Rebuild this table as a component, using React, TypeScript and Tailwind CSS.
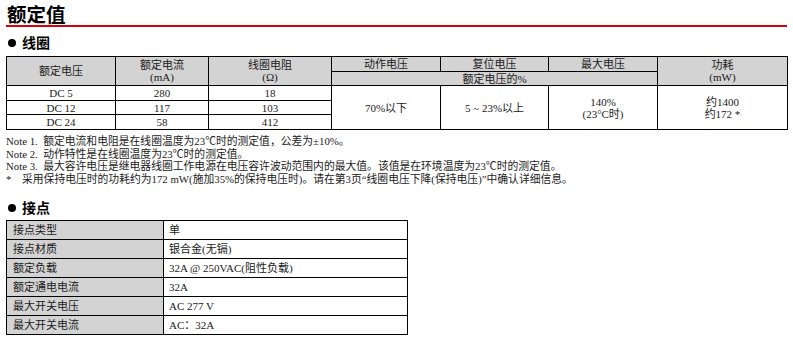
import React from "react";

const th = "border border-black bg-[#d3d3d3] font-normal text-center p-0 leading-[12px] text-[11px]";
const td = "border border-black text-center p-0 leading-[12px] text-[11px]";

export default function App() {
  return (
    <div className="w-[793px] h-[343px] bg-white text-[#1a1a1a] font-['Liberation_Serif','Noto_Sans_CJK_SC',serif] relative overflow-hidden">
      <div className="pl-[7px] pt-[3px] h-[25px] text-[19.5px] leading-[22px] font-bold text-black font-['Noto_Sans_CJK_SC',sans-serif]">
        额定值
      </div>
      <div className="ml-[6px] w-[781px] h-[2px] bg-[#d7000f]" />
      <div className="flex items-center pl-[8px] mt-[7px] h-[17px] gap-[6px]">
        <span className="w-[8px] h-[8px] rounded-full bg-black" />
        <span className="text-[14px] font-bold text-black font-['Noto_Sans_CJK_SC',sans-serif] leading-[17px]">线圈</span>
      </div>
      <div className="pl-[6px] mt-[5px]">
        <table className="border-collapse table-fixed w-[781px] border border-black">
          <colgroup>
            <col className="w-[109px]" />
            <col className="w-[93px]" />
            <col className="w-[123px]" />
            <col className="w-[109px]" />
            <col className="w-[108px]" />
            <col className="w-[109px]" />
            <col className="w-[130px]" />
          </colgroup>
          <tbody>
            <tr className="h-[15px]">
              <th rowSpan={2} className={th}>额定电压</th>
              <th rowSpan={2} className={th}>额定电流<br />(mA)</th>
              <th rowSpan={2} className={th}>线圈电阻<br />(Ω)</th>
              <th className={th}>动作电压</th>
              <th className={th}>复位电压</th>
              <th className={th}>最大电压</th>
              <th rowSpan={2} className={th}>功耗<br />(mW)</th>
            </tr>
            <tr className="h-[14px]">
              <th colSpan={3} className={th}>额定电压的%</th>
            </tr>
            <tr className="h-[15px]">
              <td className={td}>DC 5</td>
              <td className={td}>280</td>
              <td className={td}>18</td>
              <td rowSpan={3} className={td}>70%以下</td>
              <td rowSpan={3} className={td}>5 ~ 23%以上</td>
              <td rowSpan={3} className={td}>140%<br />(23°C时)</td>
              <td rowSpan={3} className={td}>约1400<br />约172 *</td>
            </tr>
            <tr className="h-[14px]">
              <td className={td}>DC 12</td>
              <td className={td}>117</td>
              <td className={td}>103</td>
            </tr>
            <tr className="h-[15px]">
              <td className={td}>DC 24</td>
              <td className={td}>58</td>
              <td className={td}>412</td>
            </tr>
          </tbody>
        </table>
      </div>
      <div className="pl-[6px] mt-[5px] text-[10.8px] leading-[12.5px]">
        <div>Note 1.&nbsp; 额定电流和电阻是在线圈温度为23℃时的测定值，公差为±10%。</div>
        <div>Note 2.&nbsp; 动作特性是在线圈温度为23℃时的测定值。</div>
        <div>Note 3.&nbsp; 最大容许电压是继电器线圈工作电源在电压容许波动范围内的最大值。该值是在环境温度为23℃时的测定值。</div>
        <div className="flex">
          <span className="w-[16px] shrink-0">*</span>
          <span>采用保持电压时的功耗约为172 mW(施加35%的保持电压时)。请在第3页“线圈电压下降(保持电压)”中确认详细信息。</span>
        </div>
      </div>
      <div className="flex items-center pl-[8px] mt-[14px] h-[17px] gap-[6px]">
        <span className="w-[8px] h-[8px] rounded-full bg-black" />
        <span className="text-[14px] font-bold text-black font-['Noto_Sans_CJK_SC',sans-serif] leading-[17px]">接点</span>
      </div>
      <div className="pl-[6px] mt-[4px]">
        <table className="border-collapse table-fixed w-[401px] border border-black text-[11px]">
          <colgroup>
            <col className="w-[157px]" />
            <col className="w-[244px]" />
          </colgroup>
          <tbody>
            {[
              ["接点类型", "单"],
              ["接点材质", "银合金(无镉)"],
              ["额定负载", "32A @ 250VAC(阻性负载)"],
              ["额定通电电流", "32A"],
              ["最大开关电压", "AC 277 V"],
              ["最大开关电流", "AC：32A"],
            ].map(([k, v]) => (
              <tr key={k} className="h-[19px]">
                <td className="border border-black bg-[#d3d3d3] pl-[6px] p-0 leading-[12px]">{k}</td>
                <td className="border border-black pl-[5px] p-0 leading-[12px]">{v}</td>
              </tr>
            ))}
          </tbody>
        </table>
      </div>
    </div>
  );
}
